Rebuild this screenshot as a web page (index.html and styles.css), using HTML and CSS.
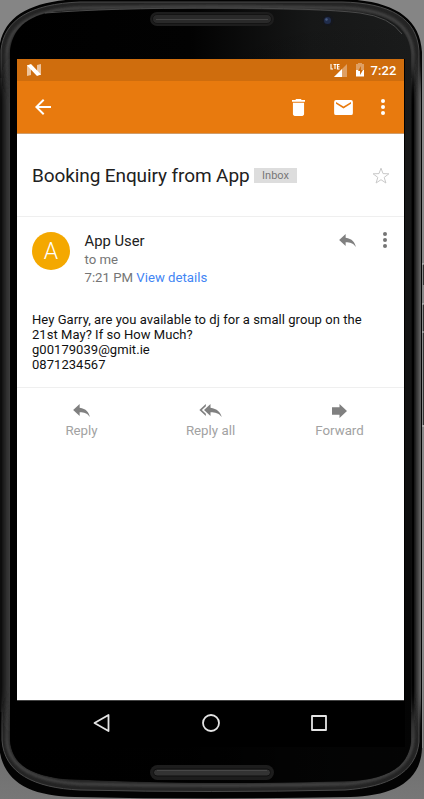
FILE: index.html
```
<!DOCTYPE html>
<html lang="en">
<head>
<meta charset="utf-8">
<title>Booking Enquiry from App</title>
<link rel="stylesheet" href="styles.css">
</head>
<body>
<div class="device">
  <svg class="shell" viewBox="0 0 424 799" aria-hidden="true">
    <defs>
      <linearGradient id="glass" x1="0" y1="0" x2="1" y2="0">
        <stop offset="0" stop-color="#000"/><stop offset=".45" stop-color="#020202"/><stop offset=".75" stop-color="#161717"/><stop offset="1" stop-color="#1b1c1c"/>
      </linearGradient>
      <linearGradient id="fade" x1="0" y1="0" x2="0" y2="1">
        <stop offset="0" stop-color="#000" stop-opacity="0"/><stop offset=".6" stop-color="#000" stop-opacity=".45"/><stop offset=".9" stop-color="#000" stop-opacity=".85"/>
      </linearGradient>
      <linearGradient id="side" x1="0" y1="0" x2="1" y2="0">
        <stop offset="0" stop-color="#050505"/><stop offset=".5" stop-color="#262626"/><stop offset="1" stop-color="#3c3c3c"/>
      </linearGradient>
      <linearGradient id="edge" x1="0" y1="0" x2="1" y2="0">
        <stop offset="0" stop-color="#181818"/><stop offset=".3" stop-color="#000"/><stop offset=".6" stop-color="#333"/><stop offset="1" stop-color="#686868"/>
      </linearGradient>
      <filter id="soft"><feGaussianBlur stdDeviation="1.2"/></filter>
      <filter id="taper" x="-10%" y="-10%" width="120%" height="120%"><feGaussianBlur stdDeviation="0 12"/></filter>
    </defs>
    <path d="M-1 50C2 17 29 1 80-1H340C391 0 420 16 422 52V748C421 783 391 796 350 797Q210 800 75 797C28 796 1 781-1 744Z" fill="#030303"/>
    <path d="M1 50C4 20 30 4 80 2H342C390 3 417 18 419 51V742C416 773 388 787 345 790Q210 793 80 790C34 788 4 773 2 740Z" fill="#242424" stroke="#4a4a4a" stroke-width="1"/>
    <path d="M7 54C8 25 33 10 80 8Q210 5 344 8C389 10 411 24 413 54V738C412 766 388 781 345 784Q210 787 80 784C34 781 8 767 7 740Z" fill="none" stroke="#424242" stroke-width="3" filter="url(#soft)"/>
    <rect x="0" y="78" width="10" height="634" fill="url(#side)" filter="url(#taper)"/>
    <rect x="410" y="78" width="11" height="634" fill="url(#edge)" filter="url(#taper)"/>
    <path d="M10 50C13 26 31 13 62 11Q210 6 355 12C392 15 410 29 411 56V742C408 766 390 778 354 781Q210 786 64 779C29 775 12 764 10 740Z" fill="url(#glass)"/>
    <path d="M10 50C13 26 31 13 62 11Q210 6 355 12C392 15 410 29 411 56V742C408 766 390 778 354 781Q210 786 64 779C29 775 12 764 10 740Z" fill="url(#fade)"/>
    <path d="M45 13Q110 8 212 8Q320 8 360 13Q390 17 402 34" fill="none" stroke="#4a4a4a"/>
    <path d="M422.500 49V748" stroke="#8c8c8c"/>
    <path d="M423.500 264V285M423.500 304V332M423.500 332V425" stroke="#333"/>
    <path d="M422 264h2M422 304h2M422 332h2M422 426h2" stroke="#ccc"/>
    <rect x="404" y="59" width="1" height="688" fill="#000"/>
    <g id="speakers" fill="#1d1d1d">
      <rect x="150" y="12" width="124" height="14" rx="7"/><rect x="152.500" y="14.500" width="119" height="9" rx="4.500" fill="#292929" stroke="#141414"/><path d="M156 19.500H268" stroke="#444"/>
      <rect x="150" y="765" width="124" height="15" rx="7.500"/><rect x="153.500" y="769" width="117" height="7" rx="3.500" fill="#333" stroke="#101010"/><path d="M157 770.500H267" stroke="#484848"/>
    </g>
    <circle cx="328" cy="20.500" r="5.500" fill="#15171d"/><circle cx="327.500" cy="20.500" r="3.500" fill="#202d4c"/><circle cx="326.500" cy="19.500" r="1.200" fill="#475b80"/>
  </svg>

  <main class="screen">
    <header>
      <div class="status">
        <svg class="n-logo" viewBox="0 0 14 12"><path d="M0 1h4v10L0 12zM10 1l4-1v11l-4-1z" fill="#edc49d"/><path d="M0 1.500L4 0 14 10.500 10 12z" fill="#fff"/></svg>
        <div class="indicators">
          <svg class="signal" viewBox="0 0 18 15"><path d="M17 1V14H4z" fill="#dfa064"/><path d="M12 6V14H4z" fill="#fff"/><path d="M1 1v5h2M3.500 1.500h3M5 1.500V6M9.500 1.500H7.500V6h2M7.500 3.700h2" fill="none" stroke="#fff" stroke-width="1.100"/></svg>
          <svg class="battery" viewBox="0 0 10 14"><path d="M3 0h4v1h2v6H1V1h2z" fill="#dfa064"/><path d="M1 7h8v6.500H1z" fill="#fff"/><path d="M6 3L3 8h2v4l3-5H6z" fill="#cf6d0d"/></svg>
          <span class="clock">7:22</span>
        </div>
      </div>
      <div class="toolbar">
        <svg class="back" viewBox="4 4 16 16"><path d="M20 11H7.800l5.600-5.600L12 4l-8 8 8 8 1.400-1.400L7.800 13H20z"/></svg>
        <svg class="trash" viewBox="5 3 14 18" preserveAspectRatio="none"><path d="M6 19c0 1.100.9 2 2 2h8c1.100 0 2-.9 2-2V7H6zM19 4h-3.500l-1-1h-5l-1 1H5v2h14z"/></svg>
        <svg class="mail" viewBox="2 4 20 16"><path d="M20 4H4a2 2 0 0 0-2 2v12a2 2 0 0 0 2 2h16a2 2 0 0 0 2-2V6a2 2 0 0 0-2-2m0 4-8 5-8-5V6l8 5 8-5z"/></svg>
        <svg class="more" viewBox="0 0 4 16"><circle cx="2" cy="2" r="2"/><circle cx="2" cy="8" r="2"/><circle cx="2" cy="14" r="2"/></svg>
      </div>
    </header>

    <section class="subject">
      <h1>Booking Enquiry from App</h1>
      <span class="tag">Inbox</span>
      <svg class="star" viewBox="0 0 18 17"><path d="M9 1.200l2 5.400 5.900.2-4.700 3.600 1.700 5.600L9 12.700 4.100 16l1.700-5.600L1.100 6.800 7 6.600z"/></svg>
    </section>

    <article class="message">
      <div class="sender">
        <div class="avatar">A</div>
        <div class="details">
          <div class="name">App User</div>
          <div>to me</div>
          <div>7:21 PM <a>View details</a></div>
        </div>
        <svg class="reply" viewBox="0 0 18 14"><path d="M7 0v4c7 1 10 5 11 10-3-4-6-5-11-5v4L0 6.500z"/></svg>
        <svg class="more" viewBox="0 0 4 16"><circle cx="2" cy="2" r="2"/><circle cx="2" cy="8" r="2"/><circle cx="2" cy="14" r="2"/></svg>
      </div>
      <p class="body">Hey Garry, are you available to dj for a small group on the<br>21st May? If so How Much?<br>g00179039@gmit.ie<br>0871234567</p>
    </article>

    <div class="actions">
      <div class="action"><svg class="reply" viewBox="0 0 18 14"><path d="M7 0v4c7 1 10 5 11 10-3-4-6-5-11-5v4L0 6.500z"/></svg><span>Reply</span></div>
      <div class="action"><svg class="reply-all" viewBox="0 0 24 14"><path d="M7 0v2.500L2.700 6.500 7 10.500V13L0 6.500zM12 0v4c7 1 11 5 12 10-3-4-7-5-12-5v4L5 6.500z"/></svg><span>Reply all</span></div>
      <div class="action"><svg class="forward" viewBox="0 0 15 14" preserveAspectRatio="none"><path d="M0 3.200h7.500V0L15 7l-7.500 7v-3.200H0z"/></svg><span>Forward</span></div>
    </div>
  </main>

  <nav class="navbar">
    <svg viewBox="0 0 20 20"><path d="M16.500 2v16L2.500 10z"/></svg>
    <svg viewBox="0 0 20 20"><circle cx="10" cy="10" r="8"/></svg>
    <svg viewBox="0 0 20 20"><rect x="3" y="3" width="14" height="14"/></svg>
  </nav>
</div>
</body>
</html>
```
FILE: styles.css
```
* { box-sizing: border-box; }
body { margin: 0; font-family: Roboto, sans-serif; }
svg { display: block; flex: none; }
.device {
  position: relative;
  width: 424px;
  height: 799px;
  padding: 59px 20px 0 17px;
  overflow: hidden;
  background: linear-gradient(#858585 0 80%, #6c6c6c 92%, #777);
}
.shell { position: absolute; inset: 0; width: 424px; height: 799px; }
.screen {
  position: relative;
  height: 641px;
  background: #fff;
  white-space: nowrap;
}
header { color: #fff; fill: #fff; }
.status {
  height: 22px;
  padding: 0 7.500px 0 10px;
  display: flex;
  align-items: center;
  justify-content: space-between;
  background: #cf6d0d;
}
.n-logo { width: 14px; height: 12px; }
.indicators { display: flex; align-items: center; }
.signal { width: 18px; height: 15px; }
.battery { width: 10px; height: 14px; margin: 0 6px 0 7px; }
.clock { font-size: 13px; font-weight: 500; letter-spacing: .1px; line-height: 24px; padding-top: 1px; }
.toolbar {
  height: 53px;
  padding: 0 19px 0 18px;
  display: flex;
  align-items: center;
  background: #e87a0e;
  border-bottom: 1px solid #cf9d6b;
}
.back { width: 16px; height: 16px; margin-right: auto; }
.trash { width: 13px; height: 17px; margin-right: 29px; }
.mail { width: 19px; height: 15px; margin-right: 28px; }
.toolbar .more { width: 4px; height: 16px; }
.subject {
  height: 83px;
  padding: 0 14px 0 15px;
  display: flex;
  align-items: center;
  border-bottom: 1px solid #efefef;
}
h1 { width: 217px; margin: 0; padding-top: 2px; font-size: 19px; font-weight: 400; letter-spacing: -.1px; color: #212121; line-height: 24px; }
.tag {
  width: 43px;
  height: 15px;
  margin-left: 5px;
  background: #ddd;
  color: #777;
  font-size: 11px;
  line-height: 15px;
  text-align: center;
}
.star { width: 18px; height: 17px; margin-left: auto; fill: none; stroke: #c9c9c9; stroke-width: 1; }
.message { height: 171px; padding: 15px 17px 0 15px; border-bottom: 1px solid #efefef; }
.sender { display: flex; height: 80px; }
.avatar {
  width: 38px;
  height: 38px;
  border-radius: 50%;
  background: #f4a800;
  color: #fff;
  font-size: 23px;
  font-weight: 300;
  line-height: 39px;
  text-align: center;
}
.details { margin-left: 14.500px; flex: 1; font-size: 13.200px; line-height: 18px; color: #757575; }
.name { font-size: 14.800px; line-height: 19px; color: #212121; }
.details a { color: #4285f4; }
.reply { width: 17px; height: 13px; fill: #808080; }
.sender .reply { margin: 2px 27px 0 0; }
.sender .more { width: 4px; height: 16px; fill: #757575; }
.body { margin: 0; font-size: 13px; letter-spacing: .045px; line-height: 15px; color: #111; }
.actions { display: grid; grid-template-columns: repeat(3, 129px); padding-top: 16px; }
.action {
  display: flex;
  flex-direction: column;
  align-items: center;
  gap: 5px;
  color: #a2a2a2;
  fill: #808080;
  font-size: 13.300px;
  line-height: 18px;
}
.reply-all { width: 23px; height: 13px; }
.forward { width: 15px; height: 14px; margin-bottom: -1px; }
.navbar {
  position: relative;
  height: 47px;
  padding: 0 75px 2px;
  display: flex;
  align-items: center;
  justify-content: space-between;
  background: #000;
  border-top: 1px solid #444;
}
.navbar svg { width: 20px; height: 20px; fill: none; stroke: #e4e4e4; stroke-width: 1.800; stroke-linejoin: round; }
```
